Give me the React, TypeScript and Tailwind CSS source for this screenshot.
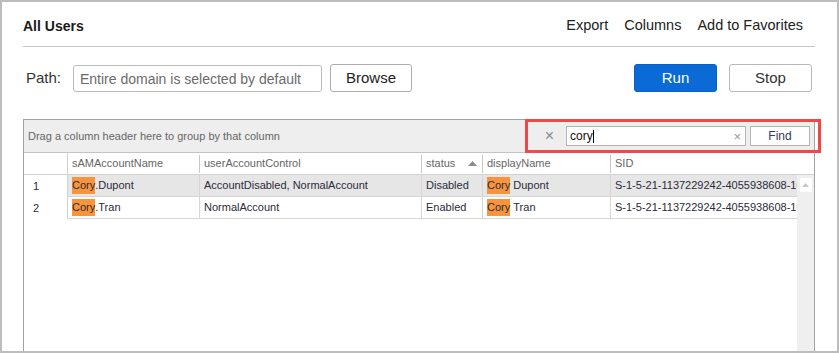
const rows = [
  { n: 1, login: "Dupont", uac: "AccountDisabled, NormalAccount", status: "Disabled", sid: "S-1-5-21-1137229242-4055938608-1093584521-1105", selected: true },
  { n: 2, login: "Tran", uac: "NormalAccount", status: "Enabled", sid: "S-1-5-21-1137229242-4055938608-1093584521-1106", selected: false },
]

function Hit({ text }: { text: string }) {
  return <span className="bg-[#f7943c]">{text}</span>
}

export default function App() {
  return (
    <div className="w-[839px] h-[353px] overflow-hidden bg-white border-2 border-[#bdbdbd] font-['Liberation_Sans',Arial,sans-serif] text-[#222]">
      <div className="pl-[21px] pr-[22px]">

        <div className="h-[45px] pt-[4px] flex items-center justify-between border-b border-[#c6c6c6]">
          <h1 className="text-[14px] font-bold text-[#1a1a1a]">All Users</h1>
          <div className="flex items-center gap-4 pr-[12px] text-[14.5px]">
            <span>Export</span>
            <span>Columns</span>
            <span>Add to Favorites</span>
          </div>
        </div>

        <div className="h-[72px] pt-[17px] flex items-start">
          <label className="w-[50px] pl-[3px] text-[15px] leading-[28px] text-[#333]">Path:</label>
          <input
            readOnly
            placeholder="Entire domain is selected by default"
            className="mt-[1px] w-[249px] h-[27px] border border-[#bcbcbc] rounded-[3px] px-[6px] text-[14px] placeholder:text-[#6b6b6b] focus:outline-none"
          />
          <button className="ml-[8px] w-[82px] h-[28px] border border-[#adadad] rounded-[3px] text-[15px] bg-white">
            Browse
          </button>
          <div className="flex-1"></div>
          <button className="w-[83px] h-[28px] rounded-[3px] bg-[#0b6bd6] border border-[#0a5fc0] text-white text-[15px]">
            Run
          </button>
          <button className="ml-[12px] mr-[3px] w-[83px] h-[28px] rounded-[3px] border border-[#b8b8b8] text-[15px] text-[#333] bg-white">
            Stop
          </button>
        </div>

        <div className="relative h-[240px] border border-[#a3a3a3] text-[11px] text-[#2b2b3b]">
          {/* group panel + search */}
          <div className="h-[33px] bg-[#eeeeee] border-b border-[#c4c4c4] flex items-center pl-[4px] pr-[4px]">
            <span className="text-[#666]">Drag a column header here to group by that column</span>
            <div className="flex-1"></div>
            <span className="text-[#8a8a8a] text-[16px] leading-none mr-[12px]">×</span>
            <div className="w-[180px] h-[20px] bg-white border border-[#b4b4b4] flex items-center pl-[3px] pr-[4px]">
              <span className="text-[12px] text-[#111]">cory</span>
              <span className="w-px h-[13px] bg-black"></span>
              <div className="flex-1"></div>
              <span className="text-[#999] text-[13px] leading-none">×</span>
            </div>
            <button className="ml-[4px] w-[60px] h-[20px] bg-white border border-[#b4b4b4] text-[12px] text-[#3a3a5c]">Find</button>
          </div>

          {/* header */}
          <div className="h-[22px] grid grid-cols-[44px_131px_222px_61px_128px_1fr] border-b border-[#d2d2d2] text-[#666]">
            <div className="border-r border-[#d2d2d2]"></div>
            <div className="flex items-center pl-[4px]">sAMAccountName</div>
            <div className="flex items-center">
              <span className="w-px h-[18px] bg-[#c8c8c8]"></span>
              <span className="pl-[4px]">userAccountControl</span>
            </div>
            <div className="flex items-center">
              <span className="w-px h-[18px] bg-[#c8c8c8]"></span>
              <span className="pl-[4px]">status</span>
              <svg className="ml-[13px]" width="9" height="5" viewBox="0 0 9 5">
                <path d="M0 5 L4.5 0 L9 5 Z" fill="#8c8c8c" />
              </svg>
            </div>
            <div className="flex items-center">
              <span className="w-px h-[18px] bg-[#c8c8c8]"></span>
              <span className="pl-[4px]">displayName</span>
            </div>
            <div className="flex items-center">
              <span className="w-px h-[18px] bg-[#c8c8c8]"></span>
              <span className="pl-[4px]">SID</span>
            </div>
          </div>

          {/* body */}
          <div className="flex h-[182px]">
            <div className="flex-1 min-w-0">
              {rows.map(r => (
                <div key={r.n} className="h-[22px] grid grid-cols-[44px_131px_222px_61px_128px_1fr]">
                  <div className="pl-[9px] flex items-center border-r border-[#d2d2d2] bg-white">{r.n}</div>
                  <div className={`pl-[4px] flex items-center border-b border-[#d6d6d6] whitespace-nowrap ${r.selected ? "bg-[#e6e6e6]" : "bg-white"}`}>
                    <Hit text="Cory" />.{r.login}
                  </div>
                  <div className={`pl-[4px] flex items-center border-b border-l border-[#d6d6d6] whitespace-nowrap ${r.selected ? "bg-[#e6e6e6]" : "bg-white"}`}>
                    {r.uac}
                  </div>
                  <div className={`pl-[4px] flex items-center border-b border-l border-[#d6d6d6] whitespace-nowrap ${r.selected ? "bg-[#e6e6e6]" : "bg-white"}`}>
                    {r.status}
                  </div>
                  <div className={`pl-[4px] flex items-center border-b border-l border-[#d6d6d6] whitespace-nowrap ${r.selected ? "bg-[#e6e6e6]" : "bg-white"}`}>
                    <Hit text="Cory" />&nbsp;{r.login}
                  </div>
                  <div className={`pl-[4px] flex items-center border-b border-l border-[#d6d6d6] whitespace-nowrap overflow-hidden ${r.selected ? "bg-[#e6e6e6]" : "bg-white"}`}>
                    {r.sid}
                  </div>
                </div>
              ))}
            </div>
            <div className="w-[17px] bg-[#efefef] pt-[3px] flex flex-col items-center">
              <div className="w-[12px] h-[14px] bg-white flex items-center justify-center">
                <svg width="7" height="4" viewBox="0 0 7 4">
                  <path d="M0 4 L3.5 0 L7 4 Z" fill="#c8c8c8" />
                </svg>
              </div>
            </div>
          </div>

          {/* annotation box */}
          <div className="absolute left-[501px] top-[-1px] w-[296px] h-[34px] border-[3px] border-[#f04848] pointer-events-none"></div>
        </div>
      </div>
    </div>
  )
}
